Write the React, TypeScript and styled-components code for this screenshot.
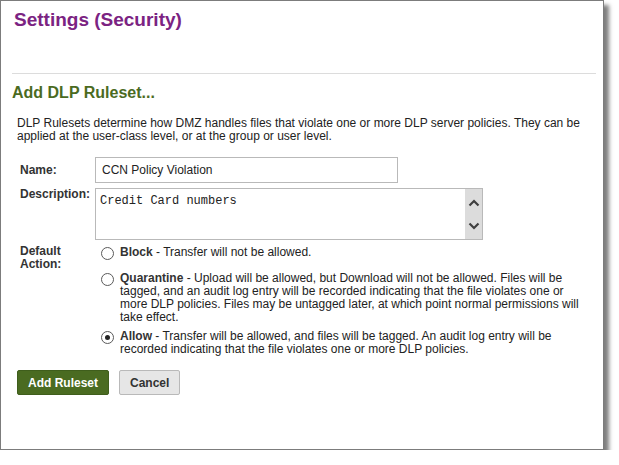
import React from 'react';
import styled, { createGlobalStyle } from 'styled-components';

const GlobalStyle = createGlobalStyle`
  html, body {
    margin: 0;
    padding: 0;
    background: #ffffff;
  }
  body {
    font-family: "Liberation Sans", Arial, sans-serif;
    font-size: 12px;
    color: #222;
  }
`;

const actions = [
  {
    key: 'block',
    name: 'Block',
    text: ' - Transfer will not be allowed.',
    checked: false,
  },
  {
    key: 'quarantine',
    name: 'Quarantine',
    text:
      ' - Upload will be allowed, but Download will not be allowed. Files will be tagged, and an audit log entry will be recorded indicating that the file violates one or more DLP policies. Files may be untagged later, at which point normal permissions will take effect.',
    checked: false,
  },
  {
    key: 'allow',
    name: 'Allow',
    text:
      ' - Transfer will be allowed, and files will be tagged. An audit log entry will be recorded indicating that the file violates one or more DLP policies.',
    checked: true,
  },
];

const App = () => {
  return (
    <>
      <GlobalStyle />
      <Window>
        <PageTitle>Settings (Security)</PageTitle>
        <Divider />
        <SectionTitle>Add DLP Ruleset...</SectionTitle>
        <Form>
          <Intro>
            DLP Rulesets determine how DMZ handles files that violate one or more DLP server policies. They can be
            applied at the user-class level, or at the group or user level.
          </Intro>
          <FieldGrid>
            <Label center>Name:</Label>
            <TextInput defaultValue="CCN Policy Violation" />
            <Label>Description:</Label>
            <TextAreaBox>
              <TextArea defaultValue="Credit Card numbers" />
              <ScrollBar>
                <Arrow viewBox="0 0 12 8">
                  <path d="M1.5 6.5 L6 2 L10.5 6.5" />
                </Arrow>
                <Arrow viewBox="0 0 12 8">
                  <path d="M1.5 1.5 L6 6 L10.5 1.5" />
                </Arrow>
              </ScrollBar>
            </TextAreaBox>
            <Label>
              Default
              <br />
              Action:
            </Label>
            <Options>
              {actions.map((a) => (
                <Option key={a.key}>
                  <Radio checked={a.checked} />
                  <OptionText>
                    <strong>{a.name}</strong>
                    {a.text}
                  </OptionText>
                </Option>
              ))}
            </Options>
          </FieldGrid>
          <Buttons>
            <Button primary>Add Ruleset</Button>
            <Button>Cancel</Button>
          </Buttons>
        </Form>
      </Window>
    </>
  );
};

export default App;

const Window = styled.div`
  box-sizing: border-box;
  width: 604px;
  height: 450px;
  border: 1px solid #7c7c7c;
  background: #fff;
  box-shadow: 5px 5px 4px rgba(0, 0, 0, 0.5);
  padding: 8px 7px 0 11px;
`;

const PageTitle = styled.h1`
  margin: 0 0 0 2px;
  font-size: 19px;
  line-height: 22px;
  font-weight: bold;
  color: #7b2382;
`;

const Divider = styled.hr`
  margin: 42px 0 0;
  border: 0;
  border-top: 1px solid #dcdcdc;
  height: 0;
`;

const SectionTitle = styled.h2`
  margin: 9px 0 0;
  font-size: 16px;
  line-height: 20px;
  font-weight: bold;
  color: #4b6b1f;
`;

const Form = styled.div`
  padding-left: 5px;
`;

const Intro = styled.p`
  margin: 14px 0 0;
  line-height: 13px;
  color: #222;
  width: 580px;
`;

const FieldGrid = styled.div`
  display: grid;
  grid-template-columns: 78px 1fr;
  row-gap: 5px;
  margin-top: 14px;
  align-items: start;
`;

const Label = styled.div<{ center?: boolean }>`
  padding-left: 3px;
  font-weight: bold;
  line-height: 13px;
  color: #333;
  align-self: ${(p) => (p.center ? 'center' : 'start')};
`;

const TextInput = styled.input`
  box-sizing: border-box;
  width: 303px;
  height: 26px;
  border: 1px solid #b9b9b9;
  padding: 0 6px;
  font-family: "Liberation Sans", Arial, sans-serif;
  font-size: 12px;
  color: #222;
  outline: none;
`;

const TextAreaBox = styled.div`
  box-sizing: border-box;
  width: 388px;
  height: 52px;
  border: 1px solid #b9b9b9;
  display: flex;
`;

const TextArea = styled.textarea`
  flex: 1;
  border: 0;
  resize: none;
  outline: none;
  padding: 5px 4px;
  font-family: "Liberation Mono", "Courier New", monospace;
  font-size: 12px;
  line-height: 14px;
  color: #222;
`;

const ScrollBar = styled.div`
  width: 17px;
  background: #dcdcdc;
  display: flex;
  flex-direction: column;
  align-items: center;
  justify-content: space-between;
  padding: 10px 0 9px;
`;

const Arrow = styled.svg`
  width: 12px;
  height: 8px;
  fill: none;
  stroke: #3f3f3f;
  stroke-width: 2.2;
`;

const Options = styled.div`
  display: flex;
  flex-direction: column;
  gap: 6px;
  padding-top: 1px;
`;

const Option = styled.div`
  display: flex;
  align-items: flex-start;
  gap: 6px;
  padding-left: 6px;
  &:first-child {
    margin-bottom: 6px;
  }
`;

const Radio = styled.span<{ checked: boolean }>`
  flex: none;
  box-sizing: border-box;
  width: 13px;
  height: 13px;
  margin-top: 1px;
  border-radius: 50%;
  border: 1px solid #5a5a5a;
  background: #fff;
  position: relative;
  &::after {
    content: '';
    display: ${(p) => (p.checked ? 'block' : 'none')};
    position: absolute;
    left: 3px;
    top: 3px;
    width: 5px;
    height: 5px;
    border-radius: 50%;
    background: #222;
  }
`;

const OptionText = styled.div`
  width: 462px;
  line-height: 13px;
  color: #222;
  strong {
    color: #333;
  }
`;

const Buttons = styled.div`
  display: flex;
  gap: 10px;
  margin-top: 14px;
`;

const Button = styled.button<{ primary?: boolean }>`
  box-sizing: border-box;
  height: 25px;
  padding: 0 10px;
  border-radius: 2px;
  font-family: "Liberation Sans", Arial, sans-serif;
  font-size: 12px;
  font-weight: bold;
  cursor: pointer;
  border: 1px solid ${(p) => (p.primary ? '#3f5e1c' : '#b9b9b9')};
  background: ${(p) => (p.primary ? '#4a6b21' : '#e6e6e6')};
  color: ${(p) => (p.primary ? '#fff' : '#333')};
`;
